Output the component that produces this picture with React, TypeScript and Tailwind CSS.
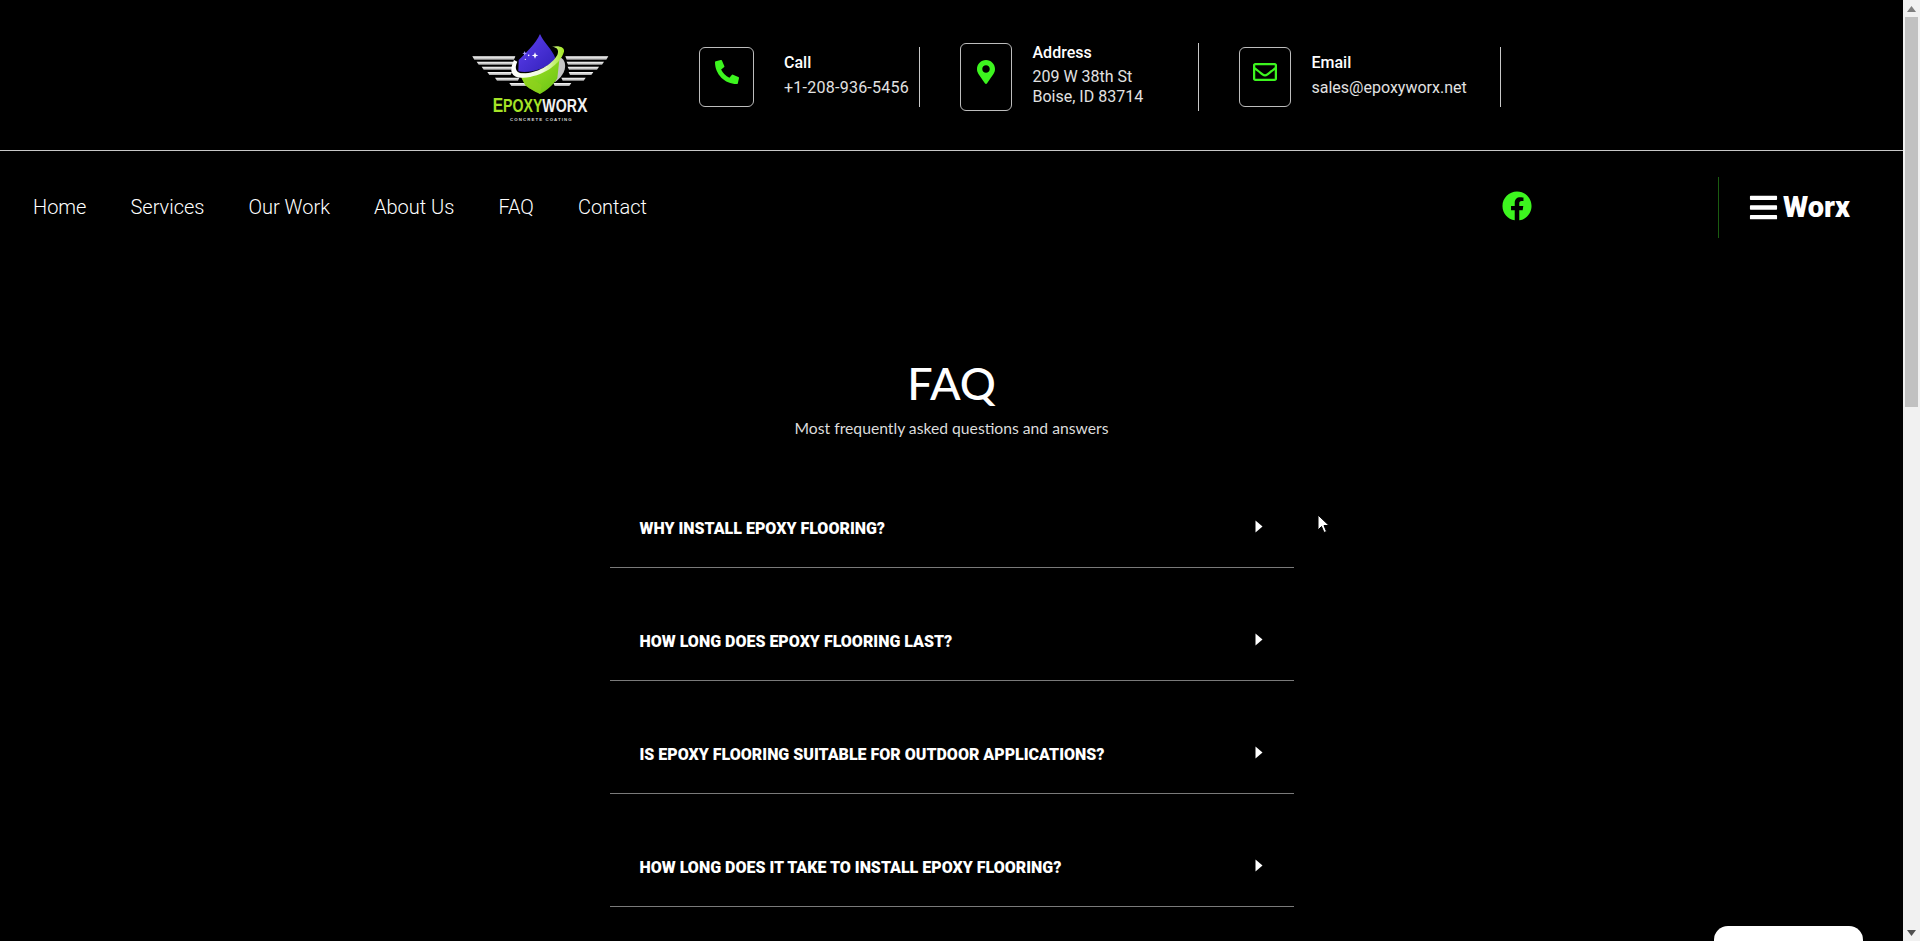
import { FaPhoneAlt, FaMapMarkerAlt, FaRegEnvelope, FaFacebook, FaBars } from "react-icons/fa";

function Logo() {
  const left: [number, number, number, number][] = [
    [97, 139, 226, 149],
    [110, 155, 222, 164],
    [125, 170, 219, 179],
    [142, 186, 216, 195],
    [165, 203, 238, 212],
    [208, 219, 262, 228],
  ];
  return (
    <svg width="200" height="130" viewBox="0 0 600 390" className="shrink-0">
      <defs>
        <linearGradient id="wing" x1="0" y1="0" x2="0" y2="1">
          <stop offset="0" stopColor="#ffffff" />
          <stop offset="1" stopColor="#a8a8a8" />
        </linearGradient>
        <linearGradient id="blue" x1="0" y1="0" x2="1" y2="1">
          <stop offset="0" stopColor="#5f40f0" />
          <stop offset="1" stopColor="#3020b8" />
        </linearGradient>
        <linearGradient id="green" x1="0" y1="0" x2="1" y2="1">
          <stop offset="0" stopColor="#a8e626" />
          <stop offset="1" stopColor="#66c214" />
        </linearGradient>
        <linearGradient id="ring" x1="0" y1="0" x2="1" y2="0">
          <stop offset="0" stopColor="#ffffff" />
          <stop offset="0.6" stopColor="#eefadb" />
          <stop offset="1" stopColor="#a2e81e" />
        </linearGradient>
      </defs>
      {left.map(([x1, y1, x2, y2], i) => (
        <g key={i} fill="url(#wing)">
          <path d={`M${x1} ${y1}H${x2}L${x2 - 4} ${y2}H${x1 + 6}Z`} />
          <path d={`M${602 - x1} ${y1}H${602 - x2}L${602 - x2 + 4} ${y2}H${602 - x1 - 6}Z`} />
        </g>
      ))}
      <path d="M352 140C372 140 384 165 368 192C360 205 352 212 345 216Z" fill="#c4c4c4" />
      <path d="M300 72C310 95 330 112 342 135L348 150C312 178 265 192 235 184L236 150C258 128 288 100 300 72Z" fill="url(#blue)" />
      <path d="M240 190C285 196 335 178 358 150L352 205C340 225 320 242 300 252C282 244 262 232 256 226L245 205Z" fill="url(#green)" />
      <path d="M300 252C282 244 262 232 256 226L245 205C275 205 290 215 305 225Z" fill="#8fd11c" opacity="0.6" />
      <path d="M222 150C205 185 215 205 250 203C305 200 360 165 372 125C375 112 358 105 336 110C352 112 358 120 352 135C335 165 290 190 250 190C228 190 222 175 232 155Z" fill="url(#ring)" />
      <path d="M285 127L288 134L295 136L288 139L285 146L282 139L275 136L282 134Z" fill="#fff" />
      <path d="M254 123L256 128L261 130L256 132L254 137L252 132L247 130L252 128Z" fill="#a79bff" />
      <circle cx="266" cy="136" r="2.5" fill="#fff" />
      <circle cx="256" cy="148" r="2" fill="#fff" />
      <text x="158" y="305" fontFamily="Liberation Sans, sans-serif" fontWeight="700" fontSize="56" textLength="284" lengthAdjust="spacingAndGlyphs">
        <tspan fontSize="62" fill="#a6e327">E</tspan>
        <tspan fill="#a6e327">POXY</tspan>
        <tspan fill="#f2f2f2">WOR</tspan>
        <tspan fontSize="62" fill="#f2f2f2">X</tspan>
      </text>
      <text x="210" y="332" fontFamily="Liberation Sans, sans-serif" fontWeight="700" fontSize="13" fill="#d8d8d8" textLength="185">CONCRETE COATING</text>
    </svg>
  );
}

function Contact({ icon, boxW, boxH, gap, title, lines, w }: { icon: React.ReactNode; boxW: string; boxH: string; gap: string; title: string; lines: string[]; w: string }) {
  return (
    <div className={`flex items-center ${boxH}`}>
      <div className={`flex items-center justify-center rounded-md border border-[#bdbdbd] text-[#3df51f] ${boxW} ${boxH} pb-[10px]`}>{icon}</div>
      <div className={`mb-[6px] flex flex-col ${gap} ${w}`}>
        <div className="mb-[2px] text-[16px] leading-[24px] font-medium text-white">{title}</div>
        {lines.map((l) => (
          <div key={l} className={l.startsWith("+") ? "text-[16px] leading-[20px] tracking-[0.25px] text-[#e2e2e2]" : "text-[16px] leading-[20px] text-[#e2e2e2]"}>{l}</div>
        ))}
      </div>
    </div>
  );
}

const navItems = ["Home", "Services", "Our Work", "About Us", "FAQ", "Contact"];
const faqs = [
  "WHY INSTALL EPOXY FLOORING?",
  "HOW LONG DOES EPOXY FLOORING LAST?",
  "IS EPOXY FLOORING SUITABLE FOR OUTDOOR APPLICATIONS?",
  "HOW LONG DOES IT TAKE TO INSTALL EPOXY FLOORING?",
];

export default function App() {
  return (
    <div className="relative flex h-screen overflow-hidden bg-black font-['Roboto',sans-serif] text-white">
      <div className="min-w-0 flex-1 overflow-hidden">
        <header className="flex h-[151px] items-center border-b border-[#c8c8c8] pl-[440px]">
          <Logo />
          <div className="mt-[4px] ml-[59px] flex items-center">
            <Contact icon={<FaPhoneAlt size={24} />} boxW="w-[55px]" boxH="h-[60px]" gap="gap-[1px] ml-[30px]" title="Call" lines={["+1-208-936-5456"]} w="w-[135px]" />
            <div className="h-[60px] w-px bg-[#c8c8c8]" />
            <div className="ml-[40px]">
              <Contact icon={<FaMapMarkerAlt size={24} />} boxW="w-[52px]" boxH="h-[68px]" gap="ml-[20.5px]" title="Address" lines={["209 W 38th St", "Boise, ID 83714"]} w="w-[165.5px]" />
            </div>
            <div className="h-[68px] w-px bg-[#c8c8c8]" />
            <div className="ml-[40px]">
              <Contact icon={<FaRegEnvelope size={24} />} boxW="w-[52px]" boxH="h-[60px]" gap="gap-[1px] ml-[20.5px]" title="Email" lines={["sales@epoxyworx.net"]} w="w-[188.5px]" />
            </div>
            <div className="h-[60px] w-px bg-[#c8c8c8]" />
          </div>
        </header>

        <nav className="flex h-[112px] items-center pl-[33px]">
          <div className="flex gap-[44px] text-[20px] font-light text-white">
            {navItems.map((n) => (
              <span key={n}>{n}</span>
            ))}
          </div>
          <FaFacebook size={30} className="mb-[2px] ml-[855px] text-[#3df51f]" />
          <div className="ml-[186px] h-[61px] w-px bg-[#1a5c10]" />
          <div className="ml-[29px] flex items-center gap-[4px]">
            <FaBars size={31} className="text-white" />
            <span className="text-[29px] leading-none font-black">Worx</span>
          </div>
        </nav>

        <main className="flex flex-col items-center pt-[94px]">
          <h1 className="font-['Lato',sans-serif] text-[45px] leading-[52px] font-medium text-white">FAQ</h1>
          <p className="mt-[8px] font-['Lato',sans-serif] text-[15.7px] leading-[22px] text-[#dcdcdc]">Most frequently asked questions and answers</p>
          <div className="mt-[16px] w-[684px]">
            {faqs.map((q) => (
              <div key={q} className="flex h-[113px] items-end border-b border-[#7a7a7a] pr-[31px] pl-[30px]">
                <div className="flex h-[50px] flex-1 items-start justify-between">
                  <span className="text-[16px] leading-[24px] font-black text-white">{q}</span>
                  <svg width="8" height="13" viewBox="0 0 8 13" className="mt-[3px]">
                    <path d="M0.5 0.5L7.5 6.5L0.5 12.5Z" fill="#fff" />
                  </svg>
                </div>
              </div>
            ))}
          </div>
        </main>
      </div>

      <div className="flex w-[17px] shrink-0 flex-col bg-[#f1f1f1]">
        <div className="flex h-[17px] items-center justify-center">
          <svg width="9" height="6" viewBox="0 0 9 6"><path d="M4.5 0L9 6H0Z" fill="#7f7f7f" /></svg>
        </div>
        <div className="mx-[2px] h-[390px] bg-[#c1c1c1]" />
        <div className="flex-1" />
        <div className="flex h-[17px] items-center justify-center">
          <svg width="9" height="6" viewBox="0 0 9 6"><path d="M4.5 6L9 0H0Z" fill="#505050" /></svg>
        </div>
      </div>

      <svg width="13" height="20" viewBox="0 0 13 20" className="absolute top-[514px] left-[1317px]">
        <path d="M1 1V16L4.5 12.5L7 18.5L9.5 17.5L7 11.5H12Z" fill="#fff" stroke="#000" strokeWidth="1" />
      </svg>
      <div className="absolute top-[926px] left-[1714px] h-[40px] w-[149px] rounded-[14px] bg-white" />
    </div>
  );
}
